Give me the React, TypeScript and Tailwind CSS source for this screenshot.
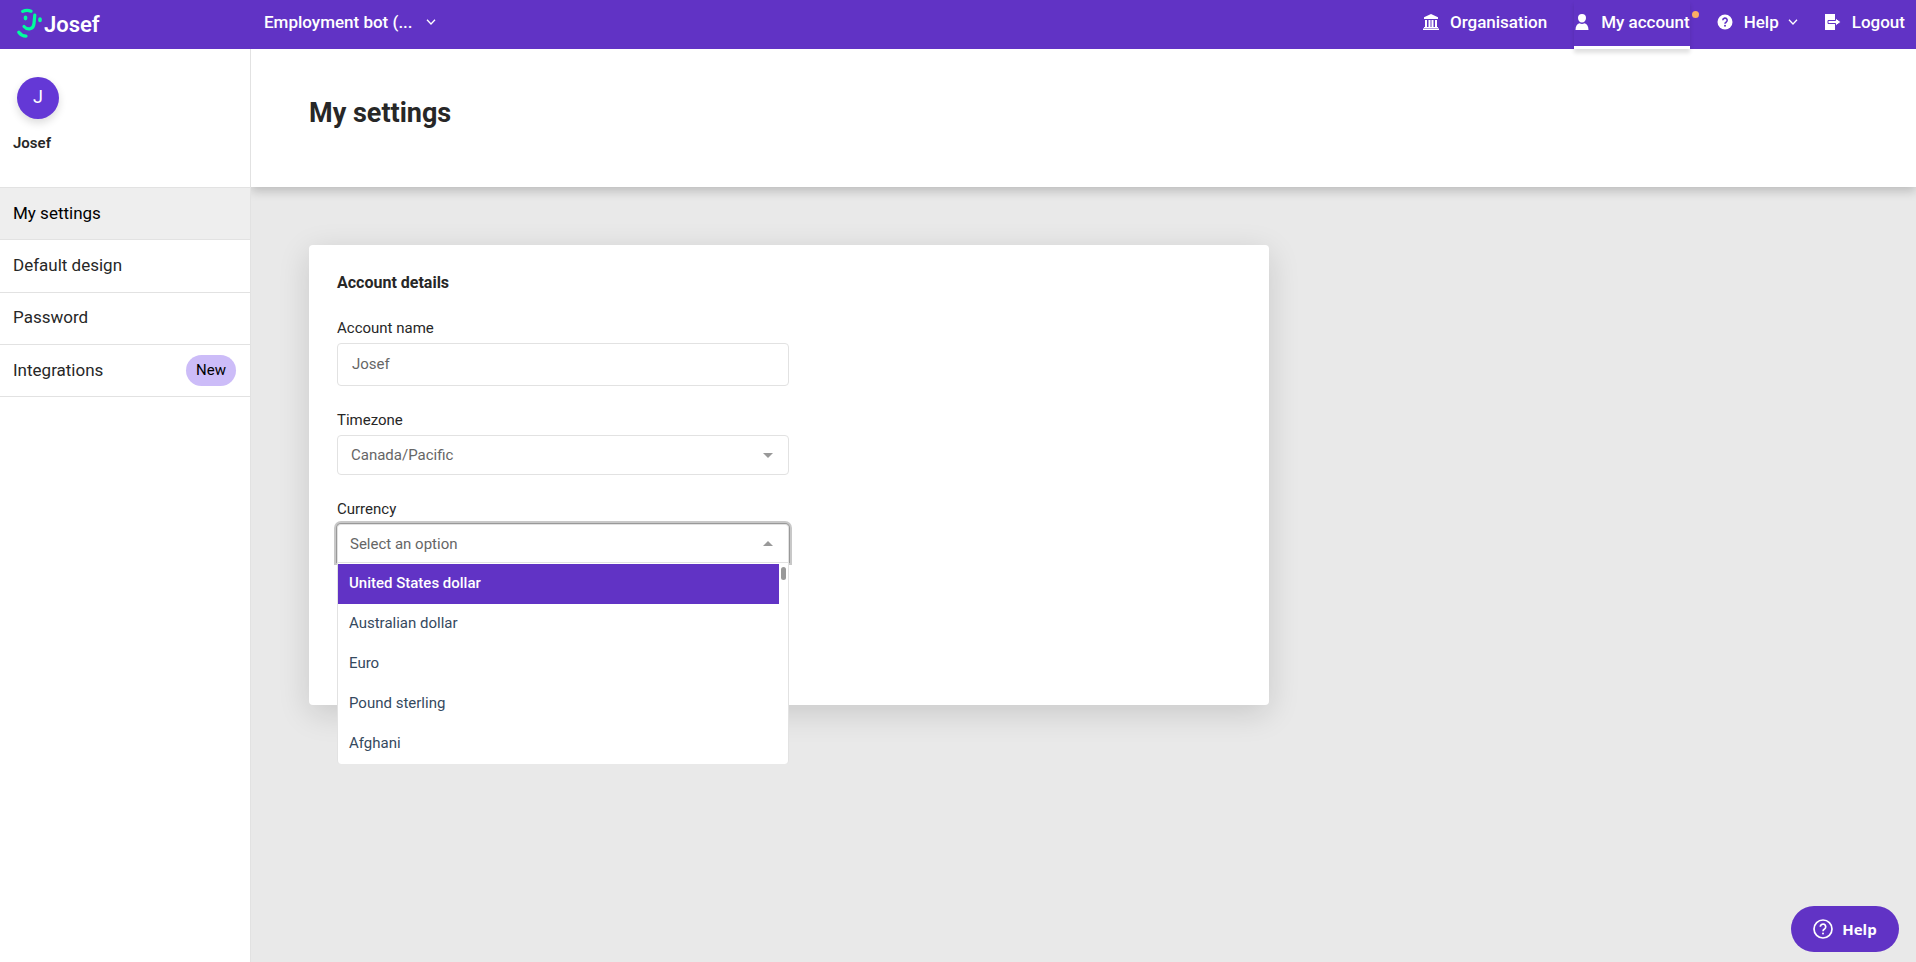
import { ReactNode, useState } from "react";

const currencies = ["United States dollar", "Australian dollar", "Euro", "Pound sterling", "Afghani"];

const menu = [
  { label: "My settings", active: true },
  { label: "Default design" },
  { label: "Password" },
  { label: "Integrations", badge: "New" },
];

function Chevron() {
  return (
    <svg viewBox="0 0 10 6" className="h-[6px] w-[10px]" fill="none" stroke="currentColor" strokeWidth="1.3" aria-hidden="true">
      <path d="M1 .8 5 5 9 .8" />
    </svg>
  );
}

function Logo() {
  return (
    <a href="#" className="flex items-center gap-px text-white" aria-label="Josef">
      <svg viewBox="0 0 26 30" className="h-[30px] w-[26px]" fill="none" stroke="#00ff9d" strokeLinecap="round" strokeWidth="3.2" aria-hidden="true">
        <path d="M5.700 3.400C8.500 2 11.500 2 14 3.200" />
        <path d="M8.500 9.200v1.400M23 11v1.400" strokeWidth="3.600" />
        <path d="M17.800 7.200 17 15.500C16.500 21.500 10.500 22.500 7 18.500" />
        <path d="M1.800 24.200C3.800 27 6 28 9 28.200" />
      </svg>
      <span className="pt-1 text-[22px] leading-[28px] font-semibold">Josef</span>
    </a>
  );
}

function NavItem({ icon, children, active }: { icon: ReactNode; children: ReactNode; active?: boolean }) {
  return (
    <a
      href="#"
      aria-current={active ? "page" : undefined}
      className={
        active
          ? "relative flex h-full items-center gap-[11px] border-b-[3px] border-white pt-[3px] pb-[5px] shadow-[0_4px_4px_rgba(0,0,0,0.12)]"
          : "flex h-full items-center gap-[11px] pb-[5px]"
      }
    >
      {icon}
      {children}
      {active && <span className="absolute top-[11px] -right-[9px] h-[7px] w-[7px] rounded-full bg-[#fbae64]" />}
    </a>
  );
}

export default function App() {
  const [name, setName] = useState("Josef");
  const [selected, setSelected] = useState(0);

  return (
    <div className="flex min-h-screen flex-col bg-[#e9e9e9] font-[Roboto,'Liberation_Sans',sans-serif] text-[#272727]">
      <header className="relative z-10 flex h-[49px] items-stretch bg-[#6133c5] text-[17px] leading-[24px] font-medium text-white">
        <div className="flex w-[264px] items-center pb-[3px] pl-[17px]">
          <Logo />
        </div>
        <button type="button" aria-haspopup="menu" className="flex items-center gap-[13px] pb-[5px]">
          Employment bot (... <Chevron />
        </button>
        <nav className="ml-auto flex gap-[27px] pr-[11px]">
          <NavItem
            icon={
              <svg viewBox="0 0 16 16" className="h-4 w-4" fill="currentColor" aria-hidden="true">
                <path d="M8 0 15 3.200V5H1V3.200ZM2 6h2v7H2zM5.500 6h2v7h-2zM8.500 6h2v7h-2zM12 6h2v7h-2zM1 13h14v1H1zM0 14.500h16V16H0z" />
              </svg>
            }
          >
            Organisation
          </NavItem>
          <NavItem
            active
            icon={
              <svg viewBox="0 0 16 16" className="h-4 w-4" fill="currentColor" aria-hidden="true">
                <path d="M8 0a4 4 0 0 1 4 4c0 2.500-1.700 4.500-4 4.500S4 6.500 4 4a4 4 0 0 1 4-4ZM1.500 16c0-3.800 1.500-6 4-6.800a5 5 0 0 0 5 0c2.500.800 4 3 4 6.800Z" />
              </svg>
            }
          >
            My account
          </NavItem>
          <NavItem
            icon={
              <svg viewBox="0 0 16 16" className="h-4 w-4" aria-hidden="true">
                <circle cx="8" cy="8" r="7.500" fill="currentColor" />
                <path d="M5.800 6.300a2.200 2.200 0 1 1 3.300 1.900c-.8.500-1.100.8-1.100 1.600" fill="none" stroke="#6133c5" strokeWidth="1.600" />
                <circle cx="8" cy="11.700" r="1" fill="#6133c5" />
              </svg>
            }
          >
            <span className="flex items-center gap-[9px]">
              Help <Chevron />
            </span>
          </NavItem>
          <NavItem
            icon={
              <svg viewBox="0 0 16 16" className="h-4 w-4" aria-hidden="true">
                <path d="M0 0h10v16H0z" fill="currentColor" />
                <path d="M3 6.500h7.500V4L16 8l-5.500 4V9.500H3Z" fill="currentColor" stroke="#6133c5" />
              </svg>
            }
          >
            Logout
          </NavItem>
        </nav>
      </header>

      <div className="flex grow">
        <aside className="relative z-[1] w-[251px] shrink-0 border-r border-[#e2e2e2] bg-white">
          <div className="flex h-[138px] flex-col items-start pt-7 pl-[13px]">
            <div className="ml-1 flex h-[42px] w-[42px] items-center justify-center rounded-full bg-[#6438d6] pb-1 text-[18px] text-white shadow-[0_4px_8px_rgba(0,0,0,0.14)]">
              J
            </div>
            <p className="mt-[14px] text-[15px] leading-[20px] font-semibold">Josef</p>
          </div>
          <nav className="grid h-[210px] auto-rows-fr border-t border-[#e2e2e2]">
            {menu.map((item) => (
              <a
                key={item.label}
                href="#"
                aria-current={item.active ? "page" : undefined}
                className={
                  item.active
                    ? "flex items-center justify-between border-b border-[#e2e2e2] bg-[#eeeeee] pr-[14px] pl-[13px] text-[17px] text-black"
                    : "flex items-center justify-between border-b border-[#e2e2e2] pr-[14px] pl-[13px] text-[17px]"
                }
              >
                {item.label}
                {item.badge && (
                  <span className="flex h-[31px] w-[50px] items-center justify-center rounded-full bg-[#ccbcf8] text-[15px] text-black">
                    {item.badge}
                  </span>
                )}
              </a>
            ))}
          </nav>
        </aside>

        <main className="min-w-0 grow">
          <div className="flex h-[138px] items-center bg-white pr-8 pb-[10px] pl-[58px] shadow-[0_4px_10px_rgba(0,0,0,0.2)]">
            <h1 className="text-[27px] leading-[34px] font-bold">My settings</h1>
          </div>

          <section className="mt-[58px] ml-[58px] h-[460px] max-w-[960px] rounded-[4px] bg-white px-7 pt-7 shadow-[0_8px_32px_rgba(0,0,0,0.14)]">
            <h2 className="text-[16px] leading-[20px] font-bold">Account details</h2>
            <div className="mt-[25px] max-w-[452px] text-[15px] leading-[20px]">
              <label htmlFor="account" className="block">Account name</label>
              <input
                id="account"
                value={name}
                onChange={(e) => setName(e.target.value)}
                className="mt-[5px] block h-[43px] w-full rounded-[4px] border border-[#e2e2e2] bg-white px-[14px] pb-[2px] text-[#666] outline-none"
              />

              <label htmlFor="timezone" className="mt-6 block">Timezone</label>
              <div className="relative mt-[5px]">
                <select
                  id="timezone"
                  className="block h-10 w-full appearance-none rounded-[4px] border border-[#e2e2e2] bg-white px-[13px] text-[#666] outline-none"
                >
                  <option>Canada/Pacific</option>
                </select>
                <svg viewBox="0 0 10 5" className="pointer-events-none absolute top-[18px] right-4 h-[5px] w-[10px]" fill="#999" aria-hidden="true">
                  <path d="M0 0h10L5 5Z" />
                </svg>
              </div>

              <span id="currency-label" className="mt-6 block">Currency</span>
              <div className="relative mt-[5px]">
                <button
                  type="button"
                  role="combobox"
                  aria-labelledby="currency-label"
                  aria-expanded="true"
                  aria-controls="currency-list"
                  className="flex h-[38px] w-full items-center justify-between rounded-t-[4px] border border-b-0 border-[#e2e2e2] bg-white pr-[15px] pl-3 text-[#666] shadow-[0_0_0_1px_#999,0_0_0_3px_#c8c8c8]"
                >
                  Select an option
                  <svg viewBox="0 0 10 5" className="h-[5px] w-[10px]" fill="#999" aria-hidden="true">
                    <path d="M0 5h10L5 0Z" />
                  </svg>
                </button>
                <div className="absolute inset-x-0 top-[38px] overflow-hidden rounded-b-[4px] border border-b-0 border-[#e2e2e2] bg-white pt-px">
                  <ul id="currency-list" role="listbox" aria-labelledby="currency-label" className="mr-[9px]">
                    {currencies.map((currency, index) => (
                      <li
                        key={currency}
                        role="option"
                        aria-selected={index === selected}
                        onMouseEnter={() => setSelected(index)}
                        className={
                          index === selected
                            ? "flex h-10 cursor-pointer items-center bg-[#6133c5] px-[11px] pb-[2px] font-medium text-white"
                            : "flex h-10 cursor-pointer items-center px-[11px] pb-[2px] text-[#35495e]"
                        }
                      >
                        {currency}
                      </li>
                    ))}
                  </ul>
                  <span className="absolute top-1 right-[2px] h-[13px] w-[5px] rounded-full bg-[#999]" />
                </div>
              </div>
            </div>
          </section>
        </main>
      </div>

      <button
        type="button"
        className="fixed right-[17px] bottom-[10px] flex h-[46px] w-[108px] items-center justify-center gap-[9px] rounded-full bg-[#6133c5] font-['Open_Sans',sans-serif] text-[15px] font-bold text-white"
      >
        <svg viewBox="0 0 20 20" className="h-5 w-5" fill="none" stroke="currentColor" strokeWidth="1.700" aria-hidden="true">
          <circle cx="10" cy="10" r="9" />
          <path d="M7.300 7.800a2.700 2.700 0 1 1 4.200 2.200C10.400 10.700 10 11.100 10 12.200" />
          <circle cx="10" cy="14.500" r="1" fill="currentColor" stroke="none" />
        </svg>
        Help
      </button>
    </div>
  );
}
